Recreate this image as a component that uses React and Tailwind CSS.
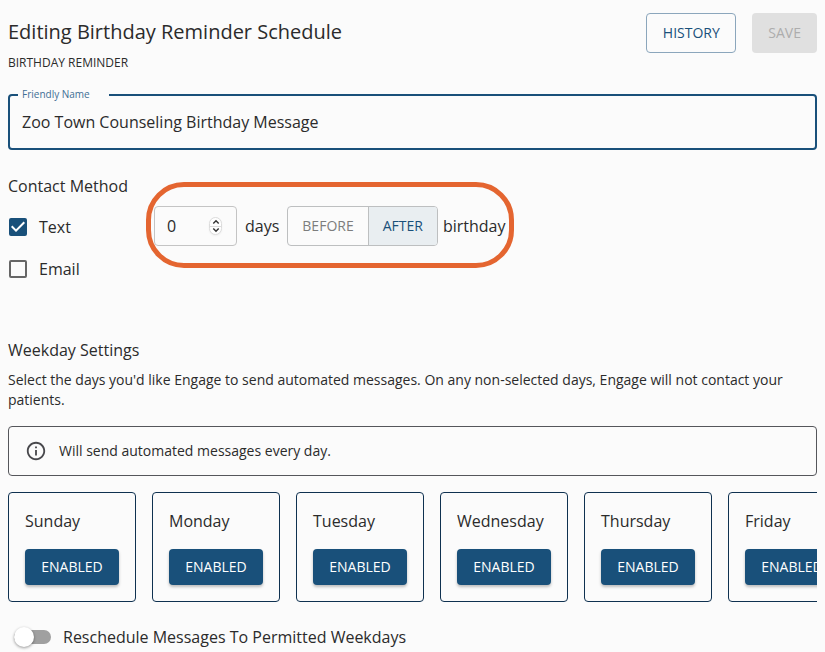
import React, { useState } from "react";

const weekdays = [
  "Sunday",
  "Monday",
  "Tuesday",
  "Wednesday",
  "Thursday",
  "Friday",
  "Saturday",
];

function ContactCheckbox({ id, label, checked, onChange }) {
  return (
    <div className="flex items-center h-[42px] pl-px">
      <div className="grid w-[18px] h-[18px]">
        <input
          id={id}
          type="checkbox"
          checked={checked}
          onChange={(e) => onChange(e.target.checked)}
          className="col-start-1 row-start-1 w-[18px] h-[18px] appearance-none rounded-xs border-2 border-[#666666] checked:border-[#19507a] checked:bg-[#19507a]"
        />
        {checked && (
          <svg
            viewBox="0 0 18 18"
            className="col-start-1 row-start-1 w-[18px] h-[18px] pointer-events-none"
          >
            <path
              d="M7 14 2 9l1.41-1.41L7 11.17l7.59-7.59L16 5z"
              fill="#ffffff"
            />
          </svg>
        )}
      </div>
      <label htmlFor={id} className="pl-3">
        {label}
      </label>
    </div>
  );
}

function DayCard({ day, enabled, onToggle }) {
  return (
    <div className="w-32 shrink-0 rounded border border-[#0f3150] p-4">
      <h3 className="mb-4">{day}</h3>
      <button
        type="button"
        onClick={onToggle}
        className="w-full h-9 rounded bg-[#19507a] text-white text-sm font-medium shadow-[0_2px_3px_rgba(0,0,0,0.25)]"
      >
        {enabled ? "ENABLED" : "DISABLED"}
      </button>
    </div>
  );
}

export default function App() {
  const [name, setName] = useState("Zoo Town Counseling Birthday Message");
  const [textOn, setTextOn] = useState(true);
  const [emailOn, setEmailOn] = useState(false);
  const [days, setDays] = useState(0);
  const [timing, setTiming] = useState("after");
  const [disabledDays, setDisabledDays] = useState([]);
  const [reschedule, setReschedule] = useState(false);

  const toggleDay = (day) => {
    setDisabledDays((prev) =>
      prev.includes(day) ? prev.filter((d) => d !== day) : [...prev, day]
    );
  };

  return (
    <div className="min-h-screen bg-[#fbfbfb] px-2 pt-[13px] font-['Open_Sans',sans-serif] text-base text-[#2b2b2b]">
      {/* Header */}
      <header>
        <div className="flex items-center justify-between">
          <h1 className="pb-0.5 text-xl">Editing Birthday Reminder Schedule</h1>
          <div className="flex gap-4 text-sm font-medium">
            <button
              type="button"
              className="h-10 px-[15px] min-w-[90px] rounded border border-[#8ba6bc] text-[#19507a]"
            >
              HISTORY
            </button>
            <button
              type="button"
              disabled
              className="h-10 px-4 rounded bg-[#e0e0e0] text-[#adadad]"
            >
              SAVE
            </button>
          </div>
        </div>
        <p className="text-xs leading-5">BIRTHDAY REMINDER</p>
      </header>

      {/* Name */}
      <fieldset className="mt-[14px] rounded border-2 border-[#19507a] px-2">
        <legend className="w-[91px] px-1 pb-0.5 text-[10px] leading-[14px] text-[#3f6f95]">
          <label htmlFor="friendly-name" className="block">
            Friendly Name
          </label>
        </legend>
        <input
          id="friendly-name"
          type="text"
          value={name}
          onChange={(e) => setName(e.target.value)}
          className="block w-full h-[45px] px-1 pb-2 bg-transparent outline-none"
        />
      </fieldset>

      {/* Contact method */}
      <section className="mt-6">
        <h2>Contact Method</h2>
        <div className="mt-2 flex items-start">
          <div className="w-[146px] shrink-0">
            <ContactCheckbox
              id="contact-text"
              label="Text"
              checked={textOn}
              onChange={setTextOn}
            />
            <ContactCheckbox
              id="contact-email"
              label="Email"
              checked={emailOn}
              onChange={setEmailOn}
            />
          </div>

          <div className="relative flex items-center">
            <div className="flex items-center justify-between w-[83px] h-10 rounded border border-[#c4c4c4] pl-3 pr-[14px]">
              <input
                id="offset-days"
                type="number"
                value={days}
                onChange={(e) => setDays(Number(e.target.value))}
                className="w-8 bg-transparent outline-none [appearance:textfield] [&::-webkit-inner-spin-button]:appearance-none"
              />
              <div className="flex flex-col w-[13px] h-[18px] rounded-full border border-[#dcdcdc] bg-white divide-y divide-[#dcdcdc] shadow-xs">
                <button
                  type="button"
                  aria-label="More days"
                  onClick={() => setDays(days + 1)}
                  className="flex flex-1 items-center justify-center"
                >
                  <svg viewBox="0 0 8 6" className="w-2 h-1.5" fill="none">
                    <path d="M1.3 4.6 4 1.8l2.7 2.8" stroke="#333333" strokeWidth="1.4" />
                  </svg>
                </button>
                <button
                  type="button"
                  aria-label="Fewer days"
                  onClick={() => setDays(Math.max(0, days - 1))}
                  className="flex flex-1 items-center justify-center"
                >
                  <svg viewBox="0 0 8 6" className="w-2 h-1.5" fill="none">
                    <path d="M1.3 1.4 4 4.2l2.7-2.8" stroke="#333333" strokeWidth="1.4" />
                  </svg>
                </button>
              </div>
            </div>
            <label htmlFor="offset-days" className="px-2">
              days
            </label>
            <div className="flex h-10 rounded border border-[#bdbfc0] overflow-hidden text-sm font-medium">
              <button
                type="button"
                onClick={() => setTiming("before")}
                className={`px-[14px] ${
                  timing === "before"
                    ? "bg-[#e9eef1] text-[#19507a]"
                    : "text-[#7d7d7d]"
                }`}
              >
                BEFORE
              </button>
              <button
                type="button"
                onClick={() => setTiming("after")}
                className={`px-[14px] border-l border-[#bdbfc0] ${
                  timing === "after"
                    ? "bg-[#e9eef1] text-[#19507a]"
                    : "text-[#7d7d7d]"
                }`}
              >
                AFTER
              </button>
            </div>
            <span className="pl-[5px]">birthday</span>
            {/* Highlight ring */}
            <div className="absolute -left-2 -right-[9px] -top-6 -bottom-[22px] rounded-[38px] border-5 border-[#e46530] pointer-events-none" />
          </div>
        </div>
      </section>

      {/* Weekday settings */}
      <section className="mt-12">
        <h2>Weekday Settings</h2>
        <p className="mt-2 text-sm">
          Select the days you'd like Engage to send automated messages. On any
          non-selected days, Engage will not contact your patients.
        </p>

        <div className="mt-4 flex items-center gap-3 rounded border border-[#55565b] px-4 py-[13px] text-sm">
          <svg viewBox="0 0 24 24" className="w-[22px] h-[22px]" fill="#48484c">
            <path d="M11 7h2v2h-2zm0 4h2v6h-2zm1-9C6.48 2 2 6.48 2 12s4.48 10 10 10 10-4.48 10-10S17.52 2 12 2m0 18c-4.41 0-8-3.59-8-8s3.59-8 8-8 8 3.59 8 8-3.59 8-8 8" />
          </svg>
          <p>
            {disabledDays.length === 0
              ? "Will send automated messages every day."
              : "Will send automated messages on enabled days."}
          </p>
        </div>

        <div className="mt-4 flex gap-4 overflow-hidden">
          {weekdays.map((day) => (
            <DayCard
              key={day}
              day={day}
              enabled={!disabledDays.includes(day)}
              onToggle={() => toggleDay(day)}
            />
          ))}
        </div>
      </section>

      {/* Reschedule switch */}
      <div className="mt-5 flex items-center h-[30px] pl-[6px]">
        <input
          id="reschedule"
          type="checkbox"
          role="switch"
          checked={reschedule}
          onChange={(e) => setReschedule(e.target.checked)}
          className="flex items-center w-[37px] h-[14px] appearance-none rounded-full bg-[#a0a0a0] before:block before:w-5 before:h-5 before:shrink-0 before:rounded-full before:bg-white before:shadow-[0_1px_3px_rgba(0,0,0,0.4)] checked:justify-end checked:bg-[#19507a]"
        />
        <label htmlFor="reschedule" className="pl-3">
          Reschedule Messages To Permitted Weekdays
        </label>
      </div>
    </div>
  );
}
